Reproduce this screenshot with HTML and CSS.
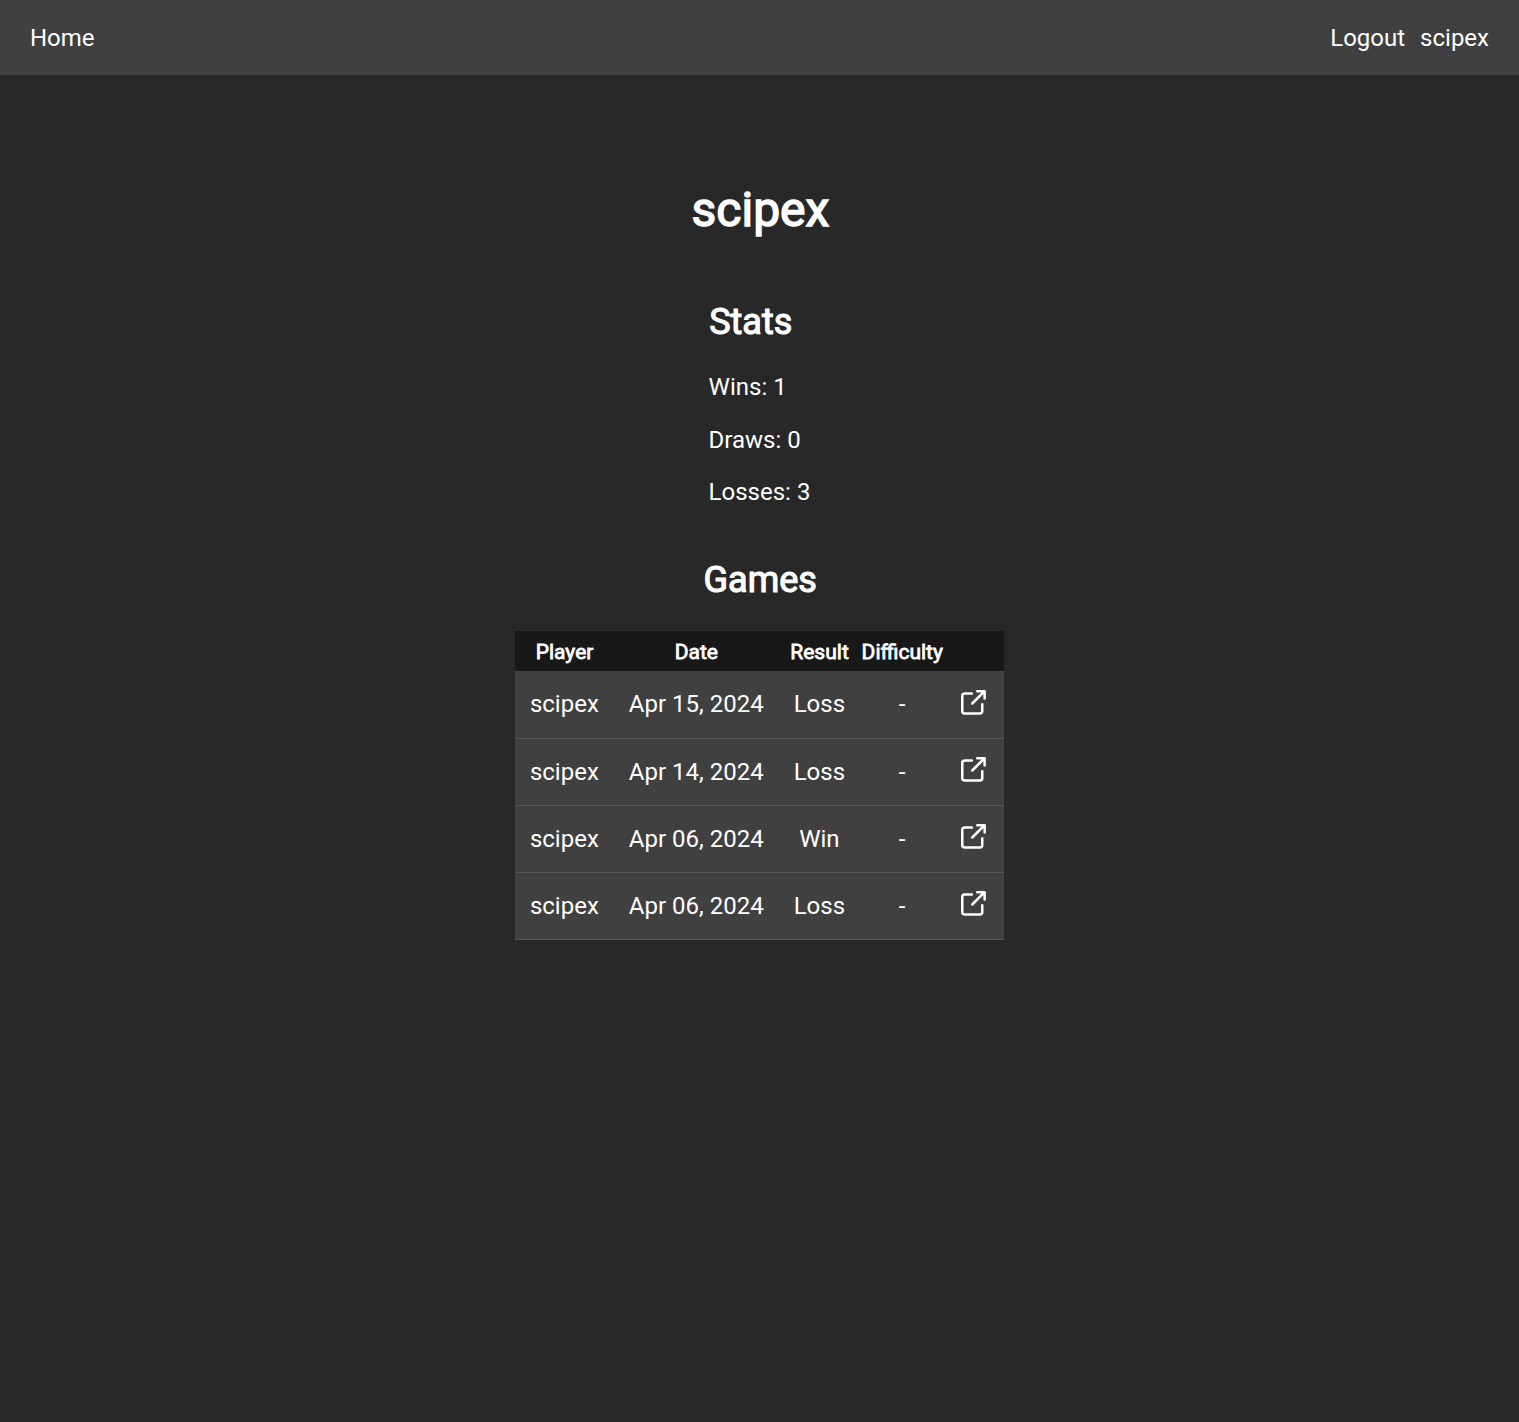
FILE: index.html
```html
<!DOCTYPE html>
<html lang="en">
<head>
<meta charset="utf-8">
<title>scipex</title>
<link rel="stylesheet" href="styles.css">
</head>
<body>
<svg class="sprite" width="0" height="0" aria-hidden="true">
  <symbol id="open" viewBox="0.4 -0.2 24 24">
    <path d="M10.7 5H5a2 2 0 0 0-2 2v12a2 2 0 0 0 2 2h12a2 2 0 0 0 2-2v-5.5M15 3.1h5.9V9M20.1 3.9 11 13"/>
  </symbol>
</svg>
<nav class="nav">
  <a class="link" href="#">Home</a>
  <div class="account"><a class="link" href="#">Logout</a><a class="link" href="#">scipex</a></div>
</nav>
<main class="profile">
  <h1 class="name">scipex</h1>
  <section class="stats">
    <h2 class="heading">Stats</h2>
    <p class="stat">Wins: 1</p>
    <p class="stat">Draws: 0</p>
    <p class="stat">Losses: 3</p>
  </section>
  <section class="games">
    <h2 class="heading">Games</h2>
    <table class="table">
      <thead><tr><th>Player</th><th>Date</th><th>Result</th><th>Difficulty</th><th></th></tr></thead>
      <tbody>
        <tr><td>scipex</td><td>Apr 15, 2024</td><td>Loss</td><td>-</td><td><a href="#"><svg class="icon"><use href="#open"/></svg></a></td></tr>
        <tr><td>scipex</td><td>Apr 14, 2024</td><td>Loss</td><td>-</td><td><a href="#"><svg class="icon"><use href="#open"/></svg></a></td></tr>
        <tr><td>scipex</td><td>Apr 06, 2024</td><td>Win</td><td>-</td><td><a href="#"><svg class="icon"><use href="#open"/></svg></a></td></tr>
        <tr><td>scipex</td><td>Apr 06, 2024</td><td>Loss</td><td>-</td><td><a href="#"><svg class="icon"><use href="#open"/></svg></a></td></tr>
      </tbody>
    </table>
  </section>
</main>
</body>
</html>
```
FILE: styles.css
```css
* { box-sizing: border-box; margin: 0; padding: 0; }
body {
  min-height: 100vh;
  background: #282828;
  color: #fff;
  font: 24px/28px Roboto, "Liberation Sans", sans-serif;
}
.sprite { display: block; }
.nav {
  display: flex;
  justify-content: space-between;
  align-items: center;
  height: 75px;
  padding: 0 30px;
  background: #404040;
}
.account { display: flex; gap: 15px; }
.link { color: inherit; text-decoration: none; }
.profile {
  display: flex;
  flex-direction: column;
  align-items: center;
  padding-top: 107px;
}
.name {
  padding-left: 2px;
  font-size: 48px;
  line-height: 56px;
  font-weight: 400;
  -webkit-text-stroke: 1.5px #fff;
}
.heading {
  font-size: 36px;
  line-height: 42px;
  font-weight: 400;
  -webkit-text-stroke: 1.125px #fff;
}
.stats { margin-top: 63px; }
.stats .heading { margin-bottom: 30px; padding-left: 0.6px; }
.stat { margin-bottom: 24.5px; }
.games {
  display: flex;
  flex-direction: column;
  align-items: center;
  margin-top: 28.5px;
}
.games .heading { margin-bottom: 30px; padding-left: 1.5px; }
.table {
  border-collapse: collapse;
  background: #404040;
  text-align: center;
}
.table thead { background: #181818; }
.table th {
  height: 40px;
  padding: 1px 1.2px 0 1.6px;
  font-size: 21px;
  line-height: 24px;
  font-weight: 400;
  -webkit-text-stroke: 0.78px #fff;
}
.table td {
  height: 67px;
  padding: 0 15px;
  border-bottom: 1px solid #555;
  white-space: nowrap;
}
.table td:last-child { padding-top: 1px; }
.icon {
  width: 30px;
  height: 30px;
  vertical-align: baseline;
  fill: none;
  stroke: #fff;
  stroke-width: 2;
  stroke-linecap: round;
  stroke-linejoin: round;
}
```
